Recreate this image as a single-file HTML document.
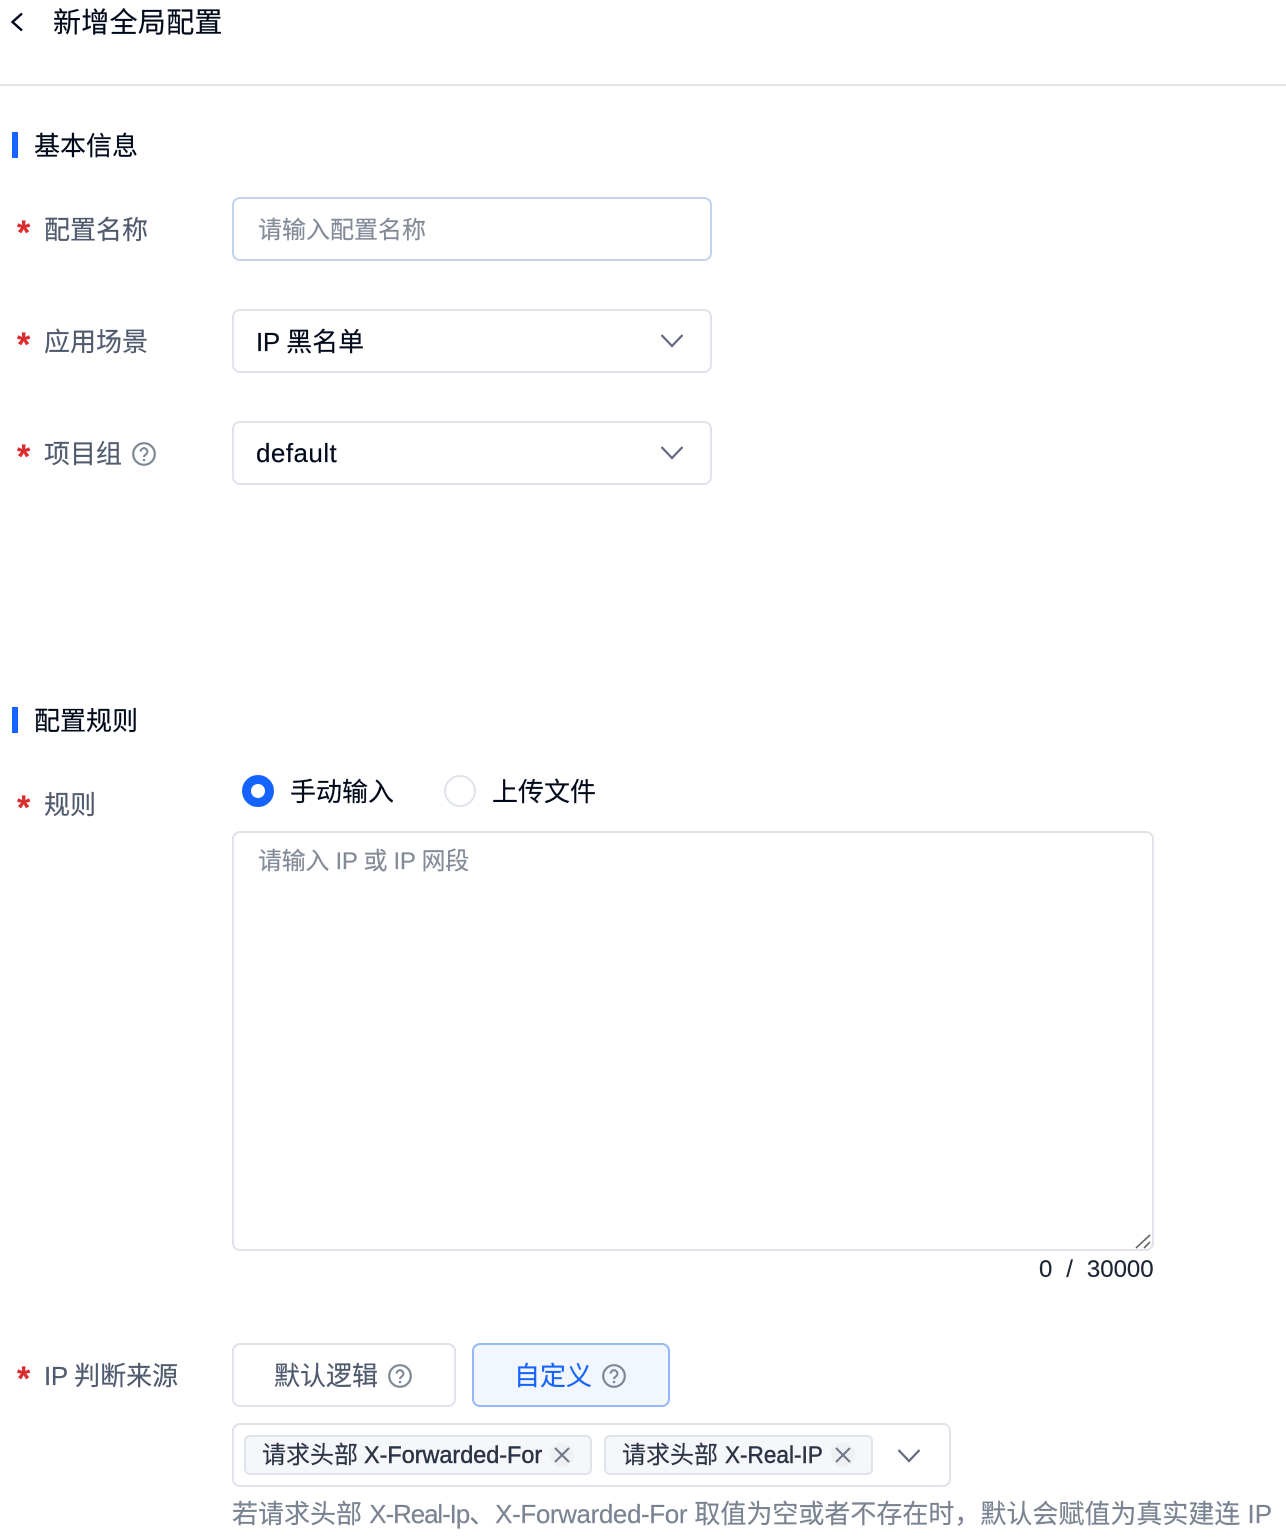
<!DOCTYPE html>
<html lang="zh-CN"><head><meta charset="utf-8"><title>新增全局配置</title>
<style>
html,body{margin:0;padding:0;background:#fff}
#p{position:relative;width:1286px;height:1540px;overflow:hidden;background:#fff;font-family:"Liberation Sans","Noto Sans CJK SC",sans-serif;font-size:26px;color:#00091a}
#p div,#p svg{position:absolute;box-sizing:border-box}
.t{white-space:nowrap;line-height:40px;height:40px;-webkit-text-stroke:.15px currentColor}
.l{color:#505a6d}
.s{color:#da2d2d;font-size:34px;font-weight:bold}
.box{border:2px solid #dfe3ea;border-radius:8px;background:#fff}
.bar{left:12px;width:6px;height:26px;background:#1664ff}
.ph{color:#838a98;font-size:24px}
.tag{background:#f5f7fa;border:2px solid #dfe3ea;border-radius:6px;height:40px}
.k{font-size:24px;color:#2b3344}
.m{-webkit-text-stroke:.45px #2b3344;transform-origin:0 50%}
</style></head><body><div id="p">

<svg style="left:8px;top:10px" width="20" height="24" viewBox="0 0 20 24"><path d="M14 3.5 L4.5 12 L14 20.5" fill="none" stroke="#00091a" stroke-width="2.4"/></svg>
<div class="t" style="left:53px;top:3px;font-size:28px;letter-spacing:.3px">新增全局配置</div>
<div style="left:0;top:84px;width:1286px;height:2px;background:#e5e5e5"></div>

<div class="bar" style="top:132px"></div>
<div class="t" style="left:34px;top:126px">基本信息</div>

<div class="t s" style="left:17px;top:213px">*</div>
<div class="t l" style="left:44px;top:210px">配置名称</div>
<div class="box" style="left:232px;top:197px;width:480px;height:64px;border-color:#c2d3f0"></div>
<div class="t ph" style="left:258px;top:211px">请输入配置名称</div>

<div class="t s" style="left:17px;top:325px">*</div>
<div class="t l" style="left:44px;top:322px">应用场景</div>
<div class="box" style="left:232px;top:309px;width:480px;height:64px"></div>
<div class="t" style="left:256px;top:322px"><span style="letter-spacing:-.4px">IP </span>黑名单</div>
<svg style="left:660px;top:333px" width="24" height="16" viewBox="0 0 24 16"><path d="M1.5 2 L12 13 L22.5 2" fill="none" stroke="#5f6a7c" stroke-width="2.2"/></svg>

<div class="t s" style="left:17px;top:437px">*</div>
<div class="t l" style="left:44px;top:434px">项目组</div>
<svg style="left:132px;top:442px" width="24" height="24" viewBox="0 0 24 24"><circle cx="12" cy="12" r="10.8" fill="none" stroke="#7d8797" stroke-width="2.2"/><path d="M8.6 9.6a3.4 3.4 0 1 1 5.2 2.9c-1.2.7-1.8 1.3-1.8 2.6" fill="none" stroke="#7d8797" stroke-width="2"/><circle cx="12" cy="18" r="1.3" fill="#7d8797"/></svg>
<div class="box" style="left:232px;top:421px;width:480px;height:64px"></div>
<div class="t" style="left:256px;top:433px;letter-spacing:.45px">default</div>
<svg style="left:660px;top:445px" width="24" height="16" viewBox="0 0 24 16"><path d="M1.5 2 L12 13 L22.5 2" fill="none" stroke="#5f6a7c" stroke-width="2.2"/></svg>

<div class="bar" style="top:707px"></div>
<div class="t" style="left:34px;top:701px">配置规则</div>

<div class="t s" style="left:17px;top:788px">*</div>
<div class="t l" style="left:44px;top:785px">规则</div>
<div style="left:242px;top:775px;width:32px;height:32px;border-radius:50%;border:9px solid #1664ff;background:#fff"></div>
<div class="t" style="left:290px;top:772px">手动输入</div>
<div style="left:444px;top:775px;width:32px;height:32px;border-radius:50%;border:2px solid #dfe3ea;background:#fff"></div>
<div class="t" style="left:492px;top:772px">上传文件</div>

<div class="box" style="left:232px;top:831px;width:922px;height:420px"></div>
<div class="t ph" style="left:258px;top:842px;letter-spacing:-.3px">请输入 IP 或 IP 网段</div>
<svg style="left:1134px;top:1232px" width="18" height="18" viewBox="0 0 18 18"><path d="M2 16 L16 3 M10 16 L16 10" fill="none" stroke="#666" stroke-width="1.6"/></svg>
<div class="t" style="left:1039px;top:1250px;font-size:24px;color:#1d2433;white-space:pre;word-spacing:.3px">0  /  30000</div>

<div class="t s" style="left:17px;top:1359px">*</div>
<div class="t l" style="left:44px;top:1356px"><span style="letter-spacing:-.4px">IP </span>判断来源</div>
<div class="box" style="left:232px;top:1343px;width:224px;height:64px"></div>
<div class="t l" style="left:274px;top:1356px">默认逻辑</div>
<svg style="left:388px;top:1364px" width="24" height="24" viewBox="0 0 24 24"><circle cx="12" cy="12" r="10.8" fill="none" stroke="#7d8797" stroke-width="2.2"/><path d="M8.6 9.6a3.4 3.4 0 1 1 5.2 2.9c-1.2.7-1.8 1.3-1.8 2.6" fill="none" stroke="#7d8797" stroke-width="2"/><circle cx="12" cy="18" r="1.3" fill="#7d8797"/></svg>
<div class="box" style="left:472px;top:1343px;width:198px;height:64px;background:#f2f6fe;border-color:#94b8fb"></div>
<div class="t" style="left:514px;top:1356px;color:#1664ff">自定义</div>
<svg style="left:602px;top:1364px" width="24" height="24" viewBox="0 0 24 24"><circle cx="12" cy="12" r="10.8" fill="none" stroke="#7d8797" stroke-width="2.2"/><path d="M8.6 9.6a3.4 3.4 0 1 1 5.2 2.9c-1.2.7-1.8 1.3-1.8 2.6" fill="none" stroke="#7d8797" stroke-width="2"/><circle cx="12" cy="18" r="1.3" fill="#7d8797"/></svg>

<div class="box" style="left:232px;top:1423px;width:719px;height:64px"></div>
<div class="tag" style="left:244px;top:1435px;width:348px"></div>
<div class="t k" style="left:262px;top:1436px">请求头部</div>
<div class="t k m" style="left:364px;top:1436px;transform:scaleX(.975)">X-Forwarded-For</div>
<div style="left:550px;top:1443px;width:24px;height:24px;border-radius:50%;background:#eef0f3"></div>
<svg style="left:552px;top:1445px" width="20" height="20" viewBox="0 0 20 20"><path d="M3 3 L17 17 M17 3 L3 17" fill="none" stroke="#6f7888" stroke-width="2"/></svg>
<div class="tag" style="left:604px;top:1435px;width:269px"></div>
<div class="t k" style="left:622px;top:1436px">请求头部</div>
<div class="t k m" style="left:725px;top:1436px;transform:scaleX(.94)">X-Real-IP</div>
<div style="left:831px;top:1443px;width:24px;height:24px;border-radius:50%;background:#eef0f3"></div>
<svg style="left:833px;top:1445px" width="20" height="20" viewBox="0 0 20 20"><path d="M3 3 L17 17 M17 3 L3 17" fill="none" stroke="#6f7888" stroke-width="2"/></svg>
<svg style="left:897px;top:1448px" width="24" height="16" viewBox="0 0 24 16"><path d="M1.5 2 L12 13 L22.5 2" fill="none" stroke="#5f6a7c" stroke-width="2.2"/></svg>

<div class="t" style="left:232px;top:1494px;color:#7a8391;width:1054px">若请求头部 <span style="letter-spacing:-1.1px">X-Real-Ip</span>、<span style="letter-spacing:-.4px">X-Forwarded-For</span> 取值为空或者不存在时，默认会赋值为真实建连 IP</div>
</div></body></html>
